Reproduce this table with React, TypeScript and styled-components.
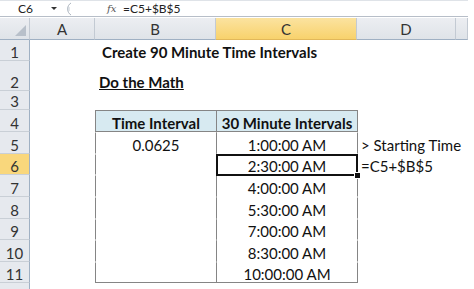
import React from 'react';
import styled, { createGlobalStyle, css } from 'styled-components';

const GlobalStyle = createGlobalStyle`
  html, body {
    margin: 0;
    padding: 0;
    background: #fff;
    overflow: hidden;
  }
  body {
    font-family: Lato, "Open Sans", sans-serif;
  }
`;

const COLS = ['A', 'B', 'C', 'D', ''];
const COL_WIDTHS = [30, 65, 121, 141, 99, 12];
const ROW_HEIGHTS = [21, 30, 19, 22, 22, 21, 22, 22, 21, 22, 21, 12];

const TIMES = ['1:00:00 AM', '2:30:00 AM', '4:00:00 AM', '5:30:00 AM', '7:00:00 AM', '8:30:00 AM', '10:00:00 AM'];

const Frame = styled.div`
  width: 468px;
  height: 289px;
  overflow: hidden;
  display: flex;
  flex-direction: column;
`;

const FormulaBar = styled.div`
  height: 16px;
  display: flex;
  align-items: center;
  border-bottom: 1px solid #b7bec8;
  border-top: 1px solid #dfe3e8;
  font-size: 12px;
  color: #222;
  margin-bottom: 1px;
`;

const NameBox = styled.div`
  width: 51px;
  padding-left: 18px;
  box-sizing: border-box;
`;

const DropArrow = styled.div`
  width: 0;
  height: 0;
  border-left: 3px solid transparent;
  border-right: 3px solid transparent;
  border-top: 3px solid #333;
`;

const Expander = styled.svg`
  margin-left: 5px;
`;

const FxLabel = styled.span`
  margin-left: 35px;
  font-family: "DejaVu Serif", serif;
  font-style: italic;
  font-size: 10px;
  color: #555;
  width: 16px;
`;

const Formula = styled.span`
  font-size: 12px;
`;

const Sheet = styled.div`
  display: grid;
  grid-template-columns: ${COL_WIDTHS.map((w) => `${w}px`).join(' ')};
  grid-template-rows: 22px ${ROW_HEIGHTS.map((h) => `${h}px`).join(' ')};
`;

const headerBg = css`
  background: linear-gradient(#eceef2, #dfe3e8);
`;

const activeBg = css`
  background: linear-gradient(#fbe3a0, #f8d26c);
`;

const Corner = styled.div`
  ${headerBg};
  border-right: 1px solid #c3cad3;
  border-bottom: 1px solid #9fb0c3;
  position: relative;
  box-sizing: border-box;
`;

const CornerMark = styled.div`
  position: absolute;
  right: 3px;
  bottom: 3px;
  width: 0;
  height: 0;
  border-left: 11px solid transparent;
  border-bottom: 11px solid #b8c0ca;
`;

const ColHead = styled.div<{ $active?: boolean }>`
  ${(p) => (p.$active ? activeBg : headerBg)};
  border-right: 1px solid #c3cad3;
  border-bottom: 1px solid ${(p) => (p.$active ? '#e2b85a' : '#9fb0c3')};
  box-sizing: border-box;
  display: flex;
  align-items: center;
  justify-content: center;
  padding-top: 1px;
  font-size: 15px;
  color: #333;
`;

const RowHead = styled.div<{ $active?: boolean }>`
  background: ${(p) => (p.$active ? '#f9d77c' : '#e6e9ee')};
  border-right: 1px solid #9fb0c3;
  border-bottom: 1px solid #c9cfd6;
  box-sizing: border-box;
  display: flex;
  align-items: flex-end;
  justify-content: center;
  overflow: hidden;
  font-size: 15px;
  color: #333;
  line-height: 16px;
`;

type Edges = { t?: boolean; r?: boolean; b?: boolean; l?: boolean };

const Cell = styled.div<{
  $edges?: Edges;
  $fill?: boolean;
  $bold?: boolean;
  $center?: boolean;
  $underline?: boolean;
  $selected?: boolean;
}>`
  position: relative;
  box-sizing: border-box;
  display: flex;
  align-items: flex-end;
  justify-content: ${(p) => (p.$center ? 'center' : 'flex-start')};
  padding: 0 3px 0;
  font-size: 15px;
  line-height: 16px;
  color: #111;
  white-space: nowrap;
  overflow: visible;
  z-index: 1;
  background: ${(p) => (p.$fill ? '#d7eaf1' : 'transparent')};
  font-weight: ${(p) => (p.$bold ? 700 : 400)};
  text-decoration: ${(p) => (p.$underline ? 'underline' : 'none')};
  border-top: 1px solid ${(p) => (p.$edges?.t ? '#858585' : 'transparent')};
  border-right: 1px solid ${(p) => (p.$edges?.r ? '#858585' : 'transparent')};
  border-bottom: 1px solid ${(p) => (p.$edges?.b ? '#858585' : 'transparent')};
  border-left: 1px solid ${(p) => (p.$edges?.l ? '#858585' : 'transparent')};
  margin-right: ${(p) => (p.$edges?.r ? '-1px' : '0')};
  ${(p) =>
    p.$selected &&
    css`
      z-index: 2;
      &::before {
        content: '';
        position: absolute;
        left: -1px;
        top: -1px;
        right: -1px;
        bottom: -2px;
        border: 2px solid #111;
      }
      &::after {
        content: '';
        position: absolute;
        right: -4px;
        bottom: -5px;
        width: 5px;
        height: 5px;
        background: #111;
        border: 1px solid #fff;
      }
    `}
`;

const Title = styled.span`
  padding-left: 3px;
`;

const Empty = styled.div``;

const App: React.FC = () => {
  const rows: React.ReactNode[] = [];

  ROW_HEIGHTS.forEach((_, i) => {
    const n = i + 1;
    rows.push(
      <RowHead key={`h${n}`} $active={n === 6}>
        {n <= 11 ? n : ''}
      </RowHead>
    );
    const cells: React.ReactNode[] = [<Empty key="a" />];

    if (n === 1) {
      cells.push(
        <Cell key="b" $bold>
          <Title>Create 90 Minute Time Intervals</Title>
        </Cell>,
        <Empty key="c" />,
        <Empty key="d" />
      );
    } else if (n === 2) {
      cells.push(
        <Cell key="b" $bold $underline>
          Do the Math
        </Cell>,
        <Empty key="c" />,
        <Empty key="d" />
      );
    } else if (n === 4) {
      cells.push(
        <Cell key="b" $fill $bold $center $edges={{ t: true, r: true, b: true, l: true }}>
          Time Interval
        </Cell>,
        <Cell key="c" $fill $bold $center $edges={{ t: true, r: true, b: true, l: true }}>
          30 Minute Intervals
        </Cell>,
        <Empty key="d" />
      );
    } else if (n >= 5 && n <= 11) {
      const last = n === 11;
      cells.push(
        <Cell key="b" $center $edges={{ r: true, b: last, l: true }}>
          {n === 5 ? '0.0625' : ''}
        </Cell>,
        <Cell key="c" $center $selected={n === 6} $edges={{ r: true, b: last, l: true }}>
          {TIMES[n - 5]}
        </Cell>,
        <Cell key="d">{n === 5 ? '> Starting Time' : n === 6 ? '=C5+$B$5' : ''}</Cell>
      );
    } else {
      cells.push(<Empty key="b" />, <Empty key="c" />, <Empty key="d" />);
    }
    cells.push(<Empty key="e" />);
    rows.push(<React.Fragment key={`r${n}`}>{cells}</React.Fragment>);
  });

  return (
    <>
      <GlobalStyle />
      <Frame>
        <FormulaBar>
          <NameBox>C6</NameBox>
          <DropArrow />
          <Expander width="10" height="14" viewBox="0 0 10 14">
            <path d="M9 1 A7 7 0 0 0 9 13" fill="none" stroke="#aab3bd" strokeWidth="1" />
            <path d="M5 6h3M5 8h3" stroke="#c5ccd4" strokeWidth="1" />
          </Expander>
          <FxLabel>fx</FxLabel>
          <Formula>=C5+$B$5</Formula>
        </FormulaBar>
        <Sheet>
          <Corner>
            <CornerMark />
          </Corner>
          {COLS.map((c) => (
            <ColHead key={c || 'e'} $active={c === 'C'}>
              {c}
            </ColHead>
          ))}
          {rows}
        </Sheet>
      </Frame>
    </>
  );
};

export default App;
